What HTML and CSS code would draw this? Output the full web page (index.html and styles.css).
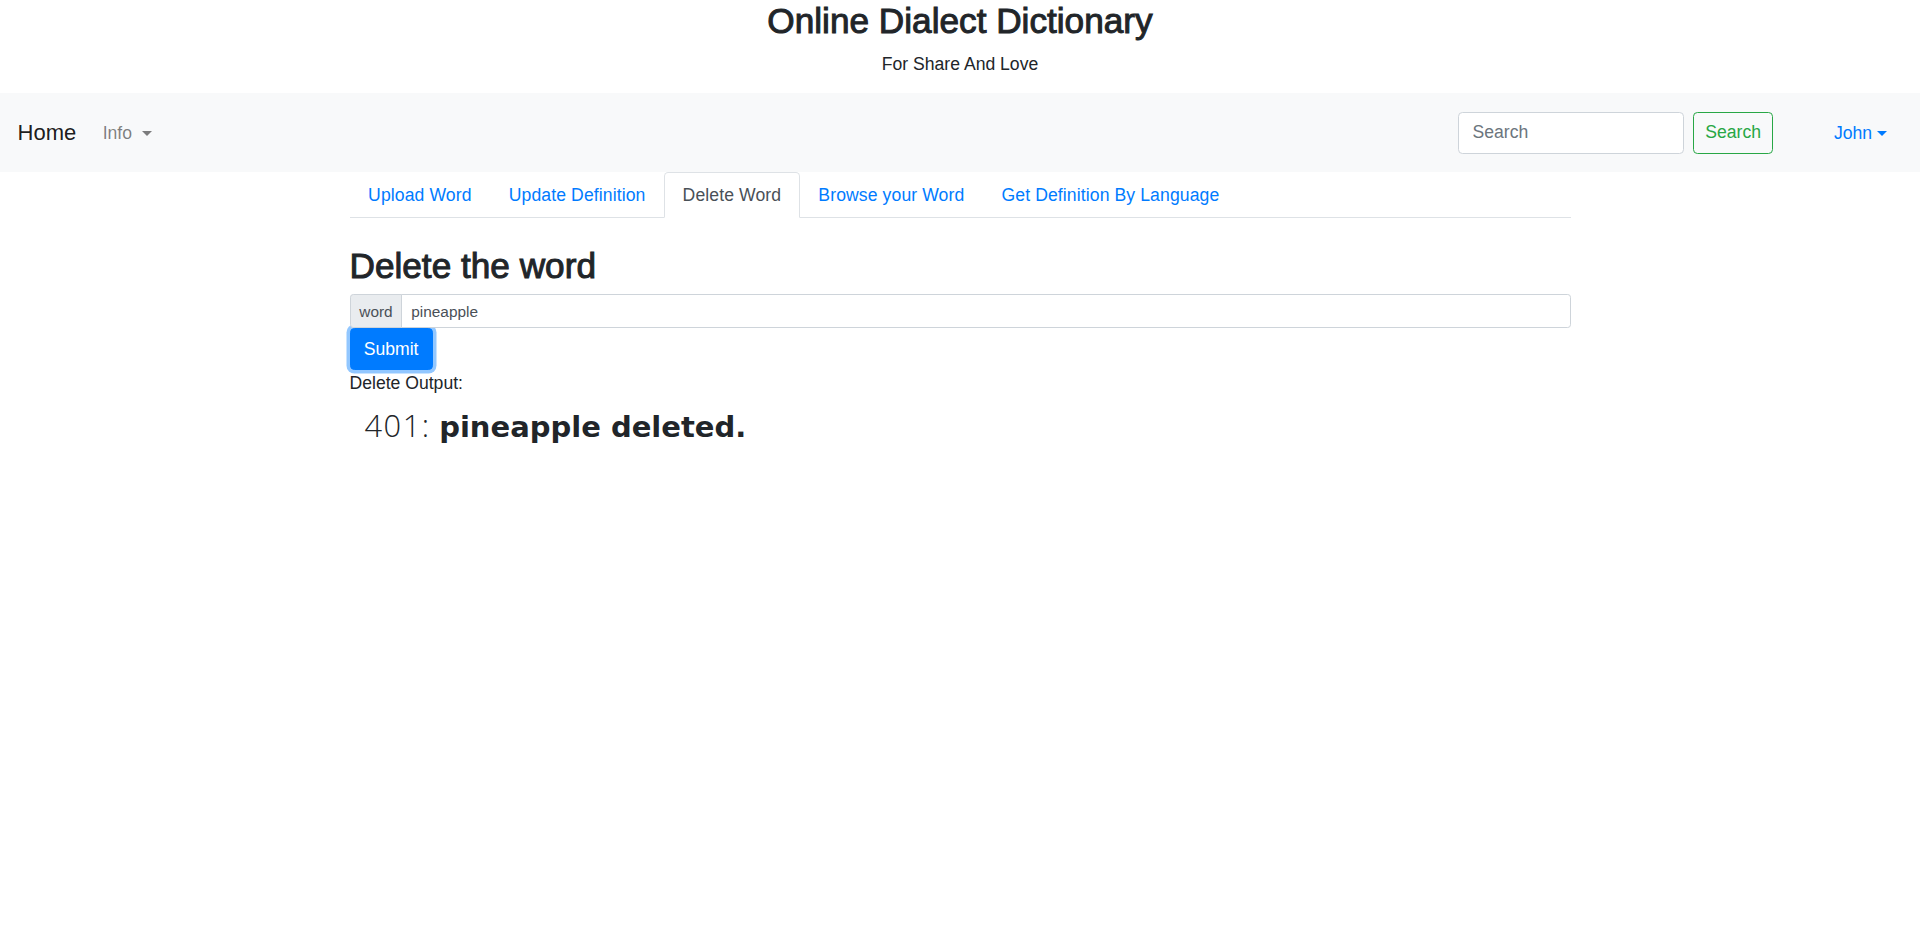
FILE: index.html
```html
<!DOCTYPE html>
<html lang="en">
<head>
<meta charset="utf-8">
<title>Online Dialect Dictionary</title>
<link rel="stylesheet" href="styles.css">
</head>
<body>
<header class="site-header">
  <h2 class="site-title">Online Dialect Dictionary</h2>
  <p class="site-tagline">For Share And Love</p>
</header>
<nav class="navbar">
  <a class="brand" href="#">Home</a>
  <ul class="nav-main">
    <li><a class="nav-link caret" href="#">Info</a></li>
  </ul>
  <form class="search-form">
    <input class="search-input" type="search" placeholder="Search">
    <button class="search-btn" type="button">Search</button>
  </form>
  <div class="user">
    <a class="user-link caret" href="#">John</a>
  </div>
</nav>
<main class="container">
  <ul class="tabs">
    <li><a class="tab" href="#">Upload Word</a></li>
    <li><a class="tab" href="#">Update Definition</a></li>
    <li><a class="tab active" href="#">Delete Word</a></li>
    <li><a class="tab" href="#">Browse your Word</a></li>
    <li><a class="tab" href="#">Get Definition By Language</a></li>
  </ul>
  <section class="pane">
    <h2 class="pane-title">Delete the word</h2>
    <div class="input-group">
      <span class="prepend">word</span>
      <input class="word-input" type="text" value="pineapple">
    </div>
    <button class="submit-btn" type="button">Submit</button>
    <div class="output-label">Delete Output:</div>
    <h3 class="output"><span class="code">401:</span> <strong class="msg">pineapple deleted.</strong></h3>
  </section>
</main>
</body>
</html>
```
FILE: styles.css
```css
* { box-sizing: border-box; }
html, body { margin: 0; padding: 0; }
body {
  font-family: "Liberation Sans", Arial, sans-serif;
  font-size: 17.6px;
  line-height: 1.5;
  color: #212529;
  background: #fff;
}
a { text-decoration: none; }

.site-header { text-align: center; }
.site-title {
  margin: 0 0 8.8px;
  font-size: 35.2px;
  line-height: 42px;
  font-weight: 400;
  -webkit-text-stroke: 1px #212529;
}
.site-tagline {
  margin: 0 0 16px;
  font-size: 17.6px;
  line-height: 26.4px;
}

.navbar {
  display: flex;
  align-items: center;
  height: 79px;
  padding: 0 17.6px;
  background: #f8f9fa;
}
.brand {
  font-size: 22px;
  line-height: 33px;
  color: rgba(0,0,0,.9);
  margin-right: 17.6px;
}
.nav-main {
  list-style: none;
  margin: 0;
  padding: 0;
  display: flex;
}
.nav-link {
  display: block;
  padding: 8.8px;
  color: rgba(0,0,0,.5);
}
.caret::after {
  content: "";
  display: inline-block;
  margin-left: 10px;
  vertical-align: 3px;
  border-top: 5.3px solid;
  border-right: 5.3px solid transparent;
  border-left: 5.3px solid transparent;
  border-bottom: 0;
}
.search-form {
  margin-left: auto;
  display: flex;
  align-items: center;
}
.search-input {
  width: 226px;
  height: 41.8px;
  margin-right: 8.8px;
  padding: 6.6px 13.2px;
  font-family: inherit;
  font-size: 17.6px;
  color: #495057;
  background: #fff;
  border: 1px solid #ced4da;
  border-radius: 4.4px;
}
.search-input::placeholder { color: #6c757d; }
.search-btn {
  width: 80px;
  height: 41.8px;
  padding: 0;
  font-family: inherit;
  font-size: 17.6px;
  color: #28a745;
  background: transparent;
  border: 1px solid #28a745;
  border-radius: 4.4px;
}
.user {
  margin-left: 52px;
  margin-right: 7px;
}
.user-link {
  display: block;
  padding: 8.8px;
  color: #007bff;
}
.user-link.caret::after { margin-left: 4.5px; }

.container {
  width: 1221px;
  margin: 0 auto;
}
.tabs {
  list-style: none;
  margin: 0;
  padding: 0;
  display: flex;
  border-bottom: 1px solid #dee2e6;
}
.tabs li { margin-bottom: -1px; }
.tab {
  display: block;
  padding: 8.8px 17.6px;
  line-height: 26.4px;
  letter-spacing: 0.1px;
  color: #007bff;
  border: 1px solid transparent;
  border-top-left-radius: 4.4px;
  border-top-right-radius: 4.4px;
}
.tab.active {
  color: #495057;
  background: #fff;
  border-color: #dee2e6 #dee2e6 #fff;
}

.pane-title {
  margin: 27px 0 7px;
  font-size: 35.2px;
  line-height: 1.2;
  font-weight: 400;
  -webkit-text-stroke: 1px #212529;
}
.input-group {
  display: flex;
  height: 34px;
}
.prepend {
  padding: 4.4px 8.8px;
  font-size: 15.4px;
  line-height: 23.1px;
  color: #495057;
  background: #e9ecef;
  border: 1px solid #ced4da;
  border-radius: 3.3px 0 0 3.3px;
  margin-right: -1px;
}
.word-input {
  flex: 1;
  padding: 4.4px 8.8px;
  font-family: inherit;
  font-size: 15.4px;
  line-height: 23.1px;
  color: #495057;
  background: #fff;
  border: 1px solid #ced4da;
  border-radius: 0 3.3px 3.3px 0;
}
.submit-btn {
  display: block;
  height: 41.8px;
  padding: 6.6px 13.2px;
  font-family: inherit;
  font-size: 17.6px;
  line-height: 26.4px;
  color: #fff;
  background: #007bff;
  border: 1px solid #007bff;
  border-radius: 4.4px;
  box-shadow: 0 0 0 3.5px rgba(38,143,255,.5);
}
.output-label {
  line-height: 26.4px;
}
.output {
  margin: 10px 0 0;
  padding-left: 15px;
  font-size: 30.8px;
  line-height: 1.2;
  font-weight: 300;
}
.code {
  font-family: "Open Sans", "Liberation Sans", sans-serif;
  font-weight: 300;
  letter-spacing: 1.5px;
}
.msg {
  font-family: "DejaVu Sans", "Liberation Sans", sans-serif;
  font-size: 29px;
  font-weight: 700;
}
```
